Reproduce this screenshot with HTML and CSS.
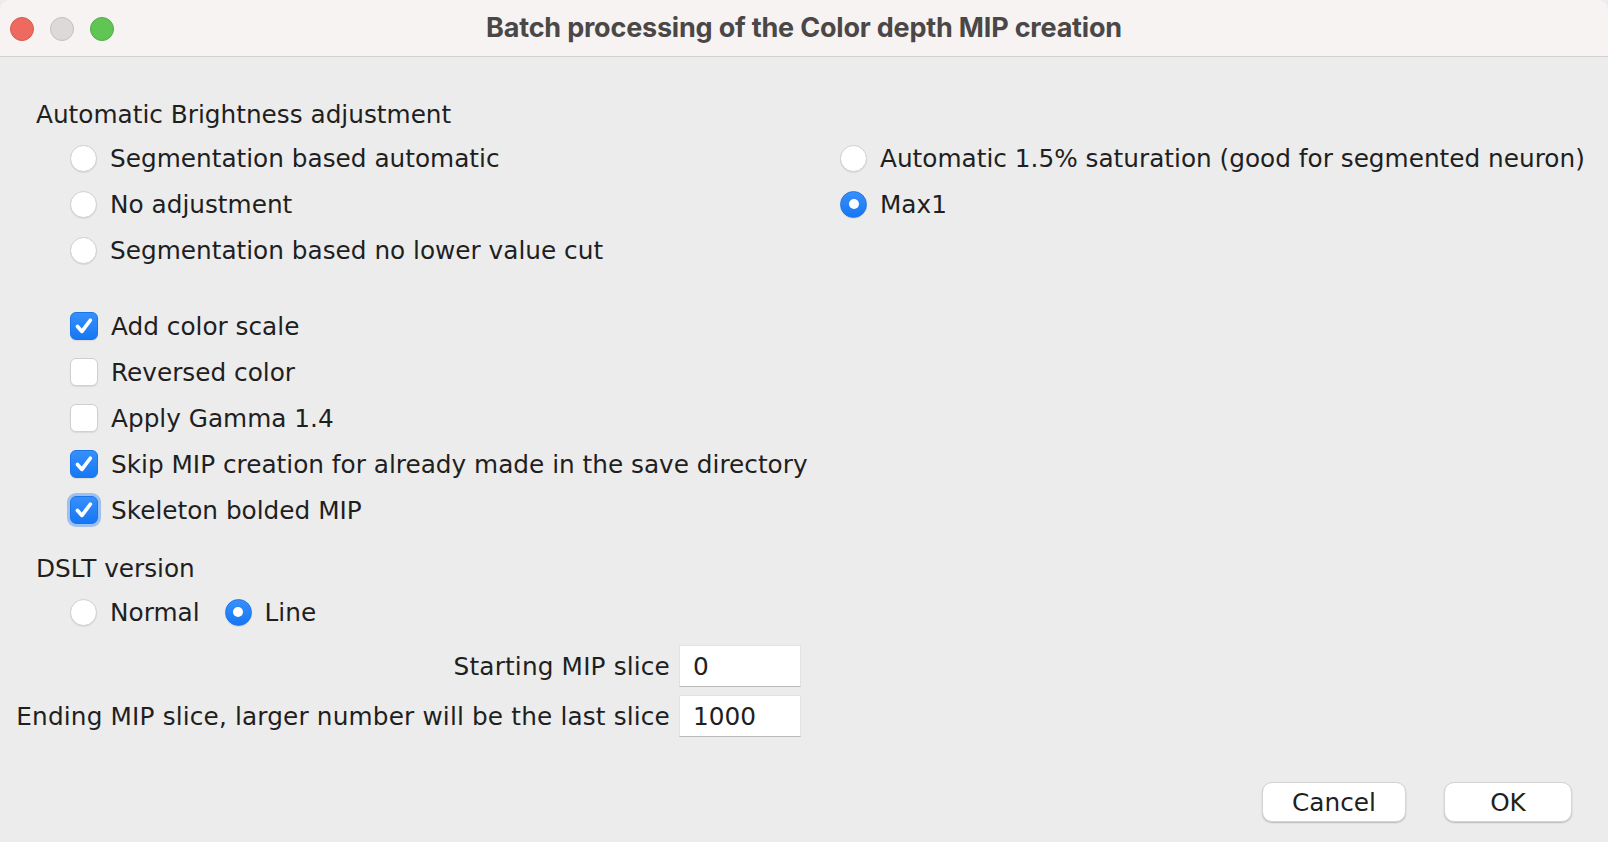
FILE: index.html
```html
<!DOCTYPE html>
<html>
<head>
<meta charset="utf-8">
<title>Batch processing of the Color depth MIP creation</title>
<link rel="stylesheet" href="styles.css">
</head>
<body>
<div class="window">
  <header class="titlebar">
    <div class="lights">
      <span class="light red"></span>
      <span class="light gray"></span>
      <span class="light green"></span>
    </div>
    <div class="title">Batch processing of the Color depth MIP creation</div>
    <div></div>
  </header>

  <main class="content">
    <div class="section-title">Automatic Brightness adjustment</div>
    <div class="opt-grid">
      <label class="opt"><span class="radio"></span><span>Segmentation based automatic</span></label>
      <label class="opt"><span class="radio"></span><span>No adjustment</span></label>
      <label class="opt"><span class="radio"></span><span>Segmentation based no lower value cut</span></label>
      <label class="opt"><span class="radio"></span><span>Automatic 1.5% saturation (good for segmented neuron)</span></label>
      <label class="opt"><span class="radio on"></span><span>Max1</span></label>
    </div>

    <div class="check-list">
      <label class="opt"><span class="check on"><svg viewBox="0 0 28 28"><path d="M7 14.5 L11.8 19.8 L20.8 7.8"/></svg></span><span>Add color scale</span></label>
      <label class="opt"><span class="check"></span><span>Reversed color</span></label>
      <label class="opt"><span class="check"></span><span>Apply Gamma 1.4</span></label>
      <label class="opt"><span class="check on"><svg viewBox="0 0 28 28"><path d="M7 14.5 L11.8 19.8 L20.8 7.8"/></svg></span><span>Skip MIP creation for already made in the save directory</span></label>
      <label class="opt"><span class="check on focus"><svg viewBox="0 0 28 28"><path d="M7 14.5 L11.8 19.8 L20.8 7.8"/></svg></span><span>Skeleton bolded MIP</span></label>
    </div>

    <div class="section-title dslt">DSLT version</div>
    <div class="inline-opts">
      <label class="opt"><span class="radio"></span><span>Normal</span></label>
      <label class="opt"><span class="radio on"></span><span>Line</span></label>
    </div>

    <div class="fields">
      <span class="field-label">Starting MIP slice</span>
      <span class="field">0</span>
      <span class="field-label">Ending MIP slice, larger number will be the last slice</span>
      <span class="field">1000</span>
    </div>

    <div class="buttons">
      <button class="btn cancel">Cancel</button>
      <button class="btn ok">OK</button>
    </div>
  </main>
</div>
</body>
</html>
```

FILE: styles.css
```css
html, body {
  margin: 0;
  padding: 0;
  background: #ececec;
}

.window {
  width: 1608px;
  height: 842px;
  background: #ececec;
  font-family: "DejaVu Sans", "Liberation Sans", sans-serif;
  font-size: 24.75px;
  color: #1f1f1f;
  overflow: hidden;
}

.titlebar {
  height: 56px;
  background: #f6f3f2;
  border-bottom: 1px solid #d3d1d0;
  display: grid;
  grid-template-columns: 1fr auto 1fr;
  align-items: center;
  border-top-left-radius: 10px;
  border-top-right-radius: 10px;
}

.lights {
  display: flex;
  gap: 16px;
  padding-left: 10px;
  padding-top: 1px;
}

.light {
  width: 22px;
  height: 22px;
  border-radius: 50%;
  border: 1px solid transparent;
}
.light.red { background: #ee6a5f; border-color: #d65b51; }
.light.gray { background: #dcd9d8; border-color: #c3c0bf; }
.light.green { background: #61c554; border-color: #4fad45; }

.title {
  font-family: "Inter", "Roboto", sans-serif;
  font-weight: 700;
  font-size: 27px;
  color: #4b4747;
  letter-spacing: -0.2px;
  margin-top: -1px;
}

.content {
  display: flex;
  flex-direction: column;
}

.section-title {
  height: 44px;
  display: flex;
  align-items: center;
  padding-left: 36px;
  margin-top: 35px;
}

.section-title.dslt {
  margin-top: 13px;
}

.opt {
  display: flex;
  align-items: center;
  gap: 13px;
  height: 46px;
  white-space: nowrap;
}

.opt-grid {
  display: grid;
  grid-auto-flow: column;
  grid-template-rows: repeat(3, 46px);
  grid-template-columns: 770px auto;
  padding-left: 70px;
  margin-top: -1px;
}

.radio {
  width: 25px;
  height: 25px;
  border-radius: 50%;
  background: #ffffff;
  border: 1px solid #cfcfcf;
  box-shadow: 0 1px 1px rgba(0, 0, 0, 0.08);
  display: flex;
  align-items: center;
  justify-content: center;
  flex: none;
}

.radio.on {
  background: linear-gradient(#3790fb, #1677f4);
  border-color: #1a74ea;
}

.radio.on::after {
  content: "";
  width: 10px;
  height: 10px;
  border-radius: 50%;
  background: #ffffff;
}

.check-list {
  display: flex;
  flex-direction: column;
  padding-left: 70px;
  margin-top: 30px;
}

.check {
  width: 26px;
  height: 26px;
  border-radius: 6px;
  background: #ffffff;
  border: 1px solid #cfcfcf;
  box-shadow: 0 1px 1px rgba(0, 0, 0, 0.08);
  flex: none;
  display: flex;
}

.check.on {
  background: linear-gradient(#3790fb, #1677f4);
  border-color: #1a74ea;
}

.check.focus {
  box-shadow: 0 0 0 3px rgba(64, 140, 245, 0.45);
}

.check svg {
  width: 26px;
  height: 26px;
}

.check svg path {
  fill: none;
  stroke: #ffffff;
  stroke-width: 4;
  stroke-linecap: round;
  stroke-linejoin: round;
}

.inline-opts {
  display: flex;
  gap: 25px;
  padding-left: 70px;
}

.inline-opts .opt {
  height: 44px;
}

.fields {
  display: grid;
  grid-template-columns: 654px 122px;
  grid-auto-rows: 42px;
  column-gap: 9px;
  row-gap: 8px;
  padding-left: 16px;
  margin-top: 11px;
  align-items: center;
}

.field-label {
  text-align: right;
  white-space: nowrap;
  letter-spacing: 0.16px;
}

.field {
  background: #ffffff;
  border: 1px solid #e2e2e2;
  border-bottom-color: #b9b9b9;
  box-sizing: border-box;
  height: 42px;
  display: flex;
  align-items: center;
  padding-left: 13px;
}

.buttons {
  display: flex;
  justify-content: flex-end;
  gap: 38px;
  padding-right: 36px;
  margin-top: 45px;
}

.btn {
  font-family: inherit;
  font-size: 24.75px;
  color: #1f1f1f;
  background: #ffffff;
  border: 1px solid #d4d4d4;
  border-radius: 10px;
  box-shadow: 0 1px 1.5px rgba(0, 0, 0, 0.22);
  height: 40px;
  padding: 0;
}

.btn.cancel { width: 144px; }
.btn.ok { width: 128px; }
```
